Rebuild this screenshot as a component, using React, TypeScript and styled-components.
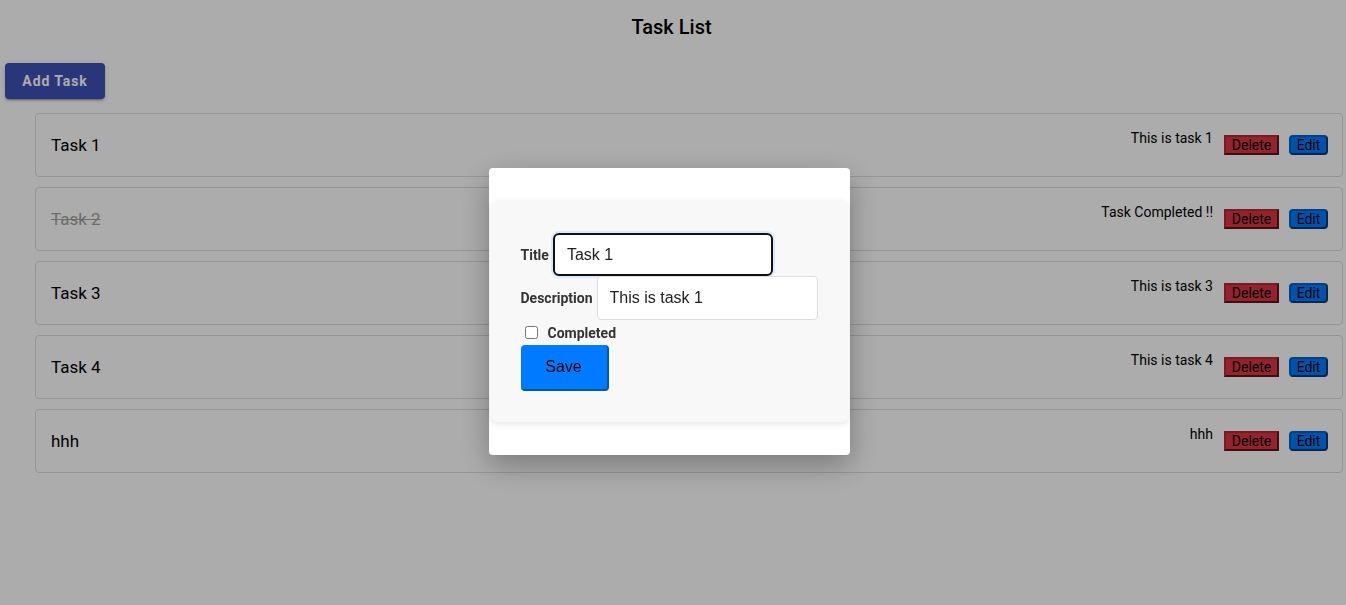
import styled, { createGlobalStyle } from "styled-components";

const GlobalStyle = createGlobalStyle`
  body {
    margin: 0;
    background: #fff;
    font-family: Roboto, "Liberation Sans", sans-serif;
  }
`;

const Page = styled.div`
  padding: 0 3px 40px 0;
`;

const PageTitle = styled.h1`
  margin: 15px 0 0;
  text-align: center;
  font-size: 20px;
  line-height: 24px;
  font-weight: 500;
  color: #000;
`;

const AddButton = styled.button`
  margin: 24px 0 0 5px;
  width: 100px;
  height: 36px;
  border: none;
  border-radius: 4px;
  background: #3f51b5;
  color: #fff;
  font-family: Roboto, sans-serif;
  font-size: 14px;
  font-weight: 700;
  letter-spacing: 0.9px;
  box-shadow: 0 3px 1px -2px rgba(0, 0, 0, 0.2), 0 2px 2px 0 rgba(0, 0, 0, 0.14),
    0 1px 5px 0 rgba(0, 0, 0, 0.12);
`;

const List = styled.div`
  margin: 14px 0 0 35px;
  display: flex;
  flex-direction: column;
  gap: 10px;
`;

const Card = styled.div`
  height: 64px;
  box-sizing: border-box;
  border: 1px solid #ddd;
  border-radius: 4px;
  padding: 0 14px 0 15px;
  display: flex;
  align-items: center;
  justify-content: space-between;
`;

const TaskName = styled.span<{ $done: boolean }>`
  font-size: 17px;
  color: ${(p) => (p.$done ? "#a0a0a0" : "#000")};
  text-decoration: ${(p) => (p.$done ? "line-through" : "none")};
`;

const Right = styled.div`
  align-self: flex-start;
  margin-top: 16px;
  display: flex;
  align-items: flex-start;
`;

const Desc = styled.span`
  font-size: 14px;
  line-height: 16px;
  color: #000;
  margin-right: 11px;
`;

const SmallButton = styled.button<{ $kind: "delete" | "edit" }>`
  margin-top: 5px;
  height: 20px;
  padding: 0;
  box-sizing: border-box;
  font-family: Roboto, sans-serif;
  font-size: 14px;
  line-height: 14px;
  color: #000;
  width: ${(p) => (p.$kind === "delete" ? "55px" : "39px")};
  margin-left: ${(p) => (p.$kind === "edit" ? "10px" : "0")};
  background: ${(p) => (p.$kind === "delete" ? "#dc3545" : "#007bff")};
  border-radius: ${(p) => (p.$kind === "delete" ? "0" : "4px")};
  border: 2px outset ${(p) => (p.$kind === "delete" ? "#b02a37" : "#0062cc")};
`;

const Overlay = styled.div`
  position: fixed;
  inset: 0;
  background: rgba(0, 0, 0, 0.325);
  display: flex;
  justify-content: center;
  align-items: flex-start;
  padding: 168px 8px 0 0;
`;

const Modal = styled.div`
  width: 361px;
  box-sizing: border-box;
  background: #fff;
  border-radius: 4px;
  padding: 32px 1px 33px;
  box-shadow: 0 10px 30px rgba(0, 0, 0, 0.3);
`;

const Form = styled.div`
  background: #f8f8f8;
  border-radius: 8px;
  padding: 33px 31px 31px;
  box-shadow: 0 2px 6px rgba(0, 0, 0, 0.1);
`;

const Row = styled.div`
  display: flex;
  align-items: center;
`;

const Label = styled.label`
  font-size: 14px;
  font-weight: 700;
  color: #333;
  margin-right: 4px;
`;

const Input = styled.input<{ $focused?: boolean }>`
  box-sizing: border-box;
  padding: 0 12px;
  font-family: "Liberation Sans", Arial, sans-serif;
  font-size: 16px;
  color: #222;
  background: #fff;
  outline: none;
  width: ${(p) => (p.$focused ? "220px" : "221px")};
  height: ${(p) => (p.$focused ? "43px" : "44px")};
  border: ${(p) => (p.$focused ? "2px solid #111" : "1px solid #ddd")};
  border-radius: ${(p) => (p.$focused ? "6px" : "4px")};
  box-shadow: ${(p) => (p.$focused ? "0 0 0 2px #dbe9fb" : "none")};
`;

const CheckRow = styled.div`
  display: flex;
  align-items: center;
  height: 25px;
`;

const Check = styled.input`
  margin: 0 10px 0 4px;
  width: 13px;
  height: 13px;
`;

const SaveButton = styled.button`
  display: block;
  width: 88px;
  height: 46px;
  background: #007bff;
  border: none;
  border-bottom: 2px solid #0056b3;
  border-right: 2px solid #0056b3;
  border-radius: 4px;
  font-family: "Liberation Sans", Arial, sans-serif;
  font-size: 16px;
  color: #000;
`;

const tasks = [
  { title: "Task 1", desc: "This is task 1", done: false },
  { title: "Task 2", desc: "Task Completed !!", done: true },
  { title: "Task 3", desc: "This is task 3", done: false },
  { title: "Task 4", desc: "This is task 4", done: false },
  { title: "hhh", desc: "hhh", done: false },
];

function App() {
  return (
    <Page>
      <GlobalStyle />
      <PageTitle>Task List</PageTitle>
      <AddButton>Add Task</AddButton>
      <List>
        {tasks.map((t) => (
          <Card key={t.title}>
            <TaskName $done={t.done}>{t.title}</TaskName>
            <Right>
              <Desc>{t.desc}</Desc>
              <SmallButton $kind="delete">Delete</SmallButton>
              <SmallButton $kind="edit">Edit</SmallButton>
            </Right>
          </Card>
        ))}
      </List>
      <Overlay>
        <Modal>
          <Form>
            <Row>
              <Label>Title</Label>
              <Input $focused defaultValue="Task 1" />
            </Row>
            <Row>
              <Label>Description</Label>
              <Input defaultValue="This is task 1" />
            </Row>
            <CheckRow>
              <Check type="checkbox" />
              <Label>Completed</Label>
            </CheckRow>
            <SaveButton>Save</SaveButton>
          </Form>
        </Modal>
      </Overlay>
    </Page>
  );
}

export default App;
